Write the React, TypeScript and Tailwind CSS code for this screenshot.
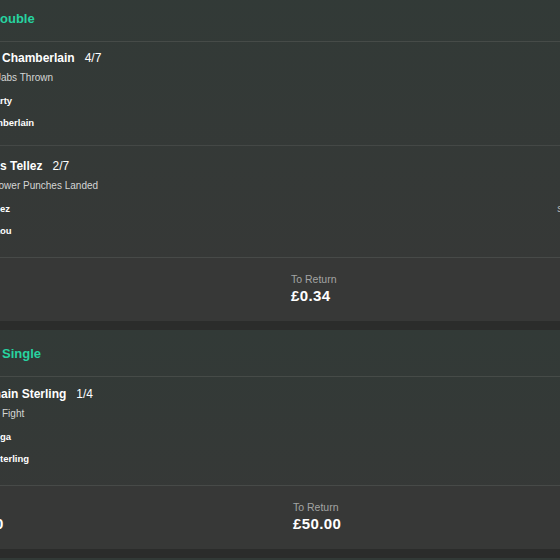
import React from 'react';

// prefix that sits to the left of the line start and runs off screen
const Cut: React.FC<{ text: string }> = ({ text }) => (
  <span className="flex w-0 shrink-0 justify-end">
    <span className="shrink-0 whitespace-pre">{text}</span>
  </span>
);

const App: React.FC = () => {
  return (
    <div
      className="w-[560px] h-[560px] overflow-hidden bg-[#2b2c2b] text-white"
      style={{ fontFamily: '"Liberation Sans", Arial, sans-serif' }}
    >
      {/* Double */}
      <div className="-mt-[5px] mb-[9px] bg-linear-to-b from-[#323a37] to-[#373837]">
        <div className="h-[47px] flex items-center pt-[2px] border-b border-[#464b48]">
          <div className="flex whitespace-nowrap text-[13px] font-bold text-[#27d3a0]">
            <Cut text="Bet Builder D" />
            ouble
          </div>
        </div>

        <div className="pt-[8px] pb-[15px] border-b border-[#444846]">
          <div className="flex h-4 items-center whitespace-nowrap pl-[2px] text-[12px] font-bold">
            <Cut text="Isaac " />
            Chamberlain
            <span className="ml-[10px] font-normal">4/7</span>
          </div>
          <div className="mt-1 flex h-[14px] items-center whitespace-nowrap pl-[1px] text-[10px] text-[#d4d6d5]">
            <Cut text="Most J" />
            abs Thrown
          </div>
          <div className="mt-[10px] flex h-[14px] items-center whitespace-nowrap text-[9.5px] font-bold">
            <Cut text="Brandon Moria" />
            rty
          </div>
          <div className="mt-2 flex h-[14px] items-center whitespace-nowrap pl-[3px] text-[9.5px] font-bold">
            <Cut text="Isaac Cham" />
            berlain
          </div>
        </div>

        <div className="pt-[12px] pb-[19px] border-b border-[#474a48]">
          <div className="flex h-4 items-center whitespace-nowrap pl-[10px] text-[12px] font-bold">
            <Cut text="Yoenis " />
            Tellez
            <span className="ml-[10px] font-normal">2/7</span>
          </div>
          <div className="mt-1 flex h-[14px] items-center whitespace-nowrap pl-[23px] text-[10px] text-[#d4d6d5]">
            <Cut text="Most Power " />
            Punches Landed
          </div>
          <div className="mt-[10px] flex h-[14px] items-center whitespace-nowrap text-[9.5px] font-bold">
            <Cut text="Yoenis Tell" />
            ez
            <span className="ml-auto w-[3px] font-normal text-[#b9bbba]">Score</span>
          </div>
          <div className="mt-2 flex h-[14px] items-center whitespace-nowrap text-[9.5px] font-bold">
            <Cut text="Abass Bara" />
            ou
          </div>
        </div>

        <div className="h-[63px] flex bg-[#373837]">
          <div className="w-[291px]" />
          <div className="pt-[15px]">
            <div className="h-[14px] flex items-center text-[10.5px] text-[#a3a5a4]">To Return</div>
            <div className="mt-px h-4 flex items-center text-[15px] font-bold tracking-[0.4px]">£0.34</div>
          </div>
        </div>
      </div>

      {/* Single */}
      <div className="mb-[9px] bg-linear-to-b from-[#323a37] to-[#373837]">
        <div className="h-[47px] flex items-center pt-[2px] border-b border-[#464b48]">
          <div className="flex whitespace-nowrap pl-[2px] text-[13px] font-bold text-[#27d3a0]">
            <Cut text="Bet Builder " />
            Single
          </div>
        </div>

        <div className="pt-[9px] pb-[19px] border-b border-[#474a48]">
          <div className="flex h-4 items-center whitespace-nowrap pl-[1px] text-[12px] font-bold">
            <Cut text="Aljam" />
            ain Sterling
            <span className="ml-[10px] font-normal">1/4</span>
          </div>
          <div className="mt-1 flex h-[14px] items-center whitespace-nowrap pl-[2px] text-[10px] text-[#d4d6d5]">
            <Cut text="To Win " />
            Fight
          </div>
          <div className="mt-[10px] flex h-[14px] items-center whitespace-nowrap text-[9.5px] font-bold">
            <Cut text="Brian Orte" />
            ga
          </div>
          <div className="mt-2 flex h-[14px] items-center whitespace-nowrap text-[9.5px] font-bold">
            <Cut text="Aljamain S" />
            terling
          </div>
        </div>

        <div className="h-[63px] flex bg-[#373837]">
          <div className="w-[293px] pt-[30px]">
            <div className="-ml-[5px] h-4 flex items-center whitespace-nowrap text-[15px] font-bold tracking-[0.4px]">
              <Cut text="£10.0" />
              0
            </div>
          </div>
          <div className="pt-[15px]">
            <div className="h-[14px] flex items-center text-[10.5px] text-[#a3a5a4]">To Return</div>
            <div className="mt-px h-4 flex items-center text-[15px] font-bold tracking-[0.4px]">£50.00</div>
          </div>
        </div>
      </div>

      <div className="h-[60px] bg-linear-to-b from-[#323a37] to-[#373837]" />
    </div>
  );
};

export default App;
